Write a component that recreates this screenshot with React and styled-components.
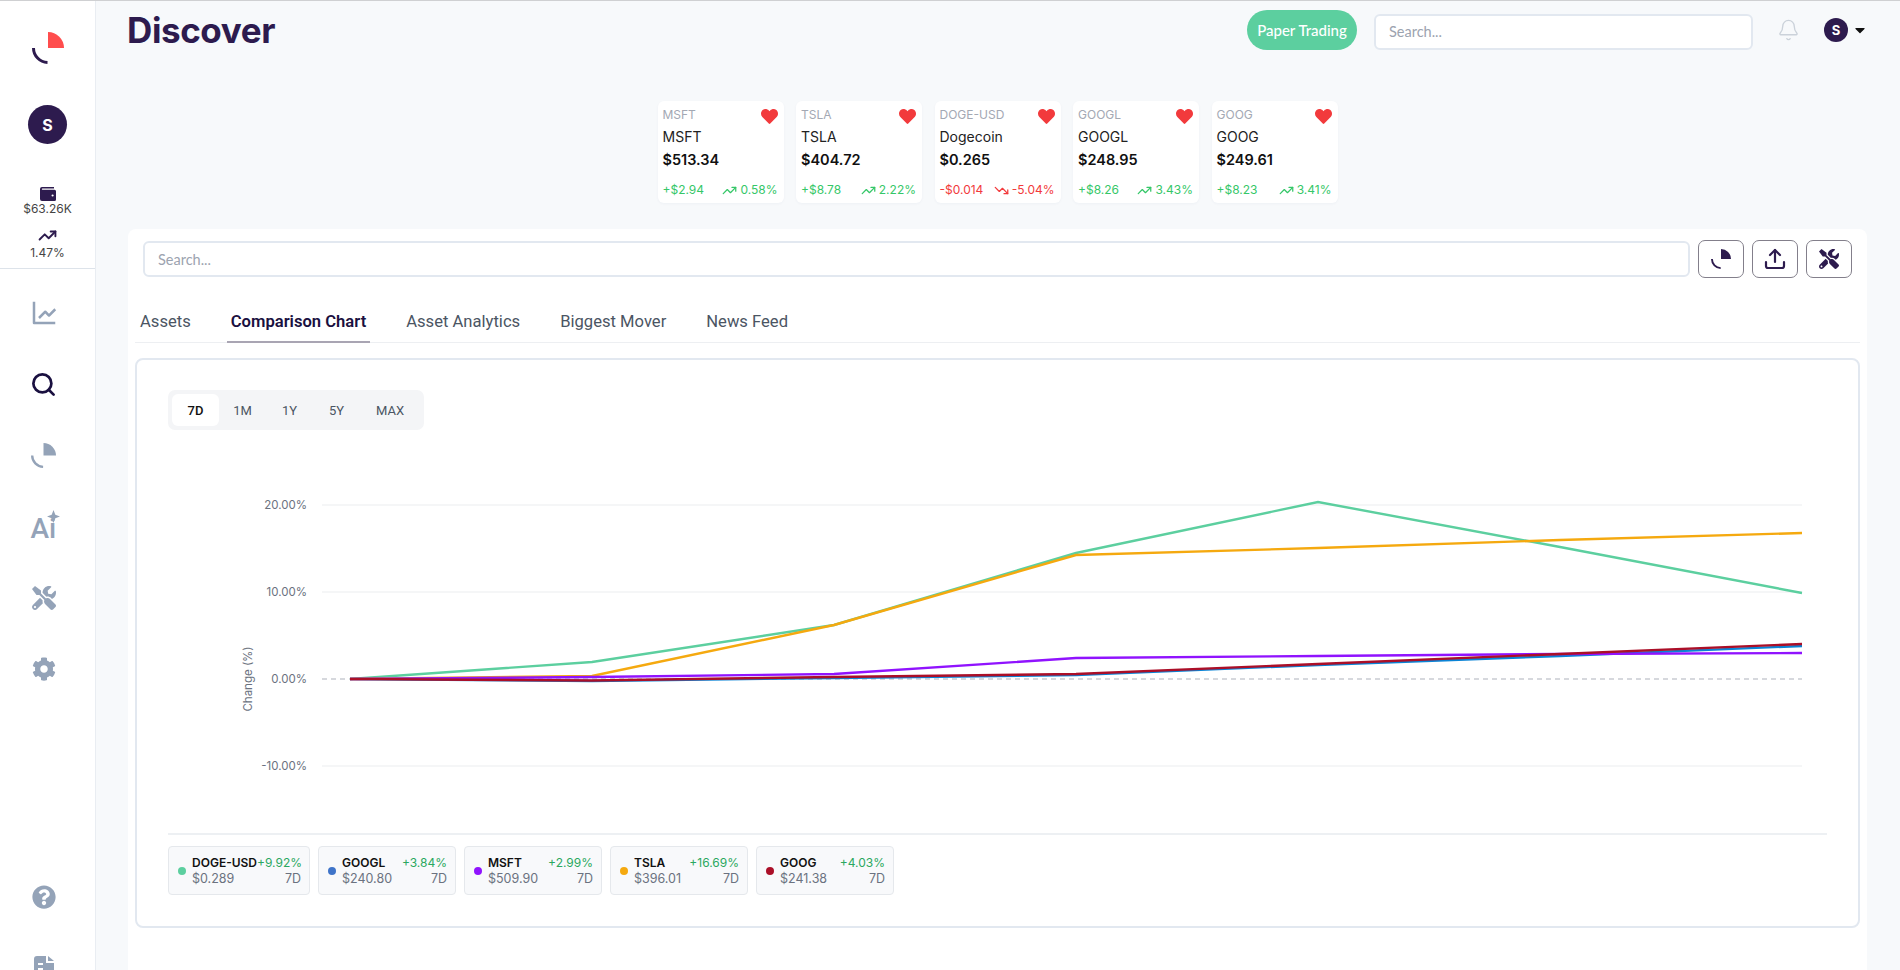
import React from "react";
import styled, { createGlobalStyle } from "styled-components";
import { Search as SearchIcon, TrendingUp, TrendingDown, Bell, Upload } from "lucide-react";
import { FaHeart, FaTools, FaCog, FaQuestionCircle, FaCaretDown } from "react-icons/fa";
import { BiLineChart } from "react-icons/bi";

const Global = createGlobalStyle`
  * { box-sizing: border-box; }
  html, body { margin: 0; padding: 0; height: 100%; overflow: hidden; }
  body { font-family: "Inter", "Liberation Sans", sans-serif; background: #f7f9fb; }
  input::placeholder { color: #9ca3af; }
`;

const tickers = [
  { sym: "MSFT", name: "MSFT", price: "$513.34", diff: "+$2.94", pct: "0.58%", up: true },
  { sym: "TSLA", name: "TSLA", price: "$404.72", diff: "+$8.78", pct: "2.22%", up: true },
  { sym: "DOGE-USD", name: "Dogecoin", price: "$0.265", diff: "-$0.014", pct: "-5.04%", up: false },
  { sym: "GOOGL", name: "GOOGL", price: "$248.95", diff: "+$8.26", pct: "3.43%", up: true },
  { sym: "GOOG", name: "GOOG", price: "$249.61", diff: "+$8.23", pct: "3.41%", up: true },
];

const legend = [
  { sym: "DOGE-USD", price: "$0.289", pct: "+9.92%", color: "#5ccf9f", wide: true },
  { sym: "GOOGL", price: "$240.80", pct: "+3.84%", color: "#3f74c9" },
  { sym: "MSFT", price: "$509.90", pct: "+2.99%", color: "#9013fe" },
  { sym: "TSLA", price: "$396.01", pct: "+16.69%", color: "#f5a90f" },
  { sym: "GOOG", price: "$241.38", pct: "+4.03%", color: "#ab0f28" },
];

const xs = [350, 592, 834, 1076, 1318, 1560, 1802];
const series = [
  { color: "#5ccf9f", ys: [678, 661, 624, 552, 501, 546, 592] },
  { color: "#0a84d6", ys: [678, 680, 677, 674, 664, 655, 645] },
  { color: "#f5a90f", ys: [678, 675, 624, 554, 547, 539, 532] },
  { color: "#9013fe", ys: [678, 676, 673, 657, 655, 653, 652] },
  { color: "#ab0f28", ys: [678, 679.5, 676, 673, 663, 653, 643] },
];
const grid = [
  { y: 504, label: "20.00%" },
  { y: 591, label: "10.00%" },
  { y: 765, label: "-10.00%" },
];

const PieMark = ({ size = 32, fill, stroke }) => (
  <svg width={size} height={size} viewBox="0 0 32 32">
    <path d="M16 0A16 16 0 0 1 32 16H16Z" fill={fill} />
    <path d="M1.5 16A14.5 14.5 0 0 0 15.5 30.5" fill="none" stroke={stroke} strokeWidth="3" />
  </svg>
);

const WalletIcon = () => (
  <svg width="16" height="14" viewBox="0 0 16 14">
    <path
      fill="#2d1b4e"
      d="M2 0h12v1.5H2.4a.6.6 0 0 0 0 1.2H14.5A1.5 1.5 0 0 1 16 4.2v8.3A1.5 1.5 0 0 1 14.5 14H2a2 2 0 0 1-2-2V2a2 2 0 0 1 2-2Zm10.6 7.4a1.1 1.1 0 1 0 0 2.2 1.1 1.1 0 0 0 0-2.2Z"
    />
  </svg>
);

const DocIcon = () => (
  <svg width="20" height="24" viewBox="0 0 20 24">
    <path fill="#94a3b8" d="M3 0h9v7h8v14a3 3 0 0 1-3 3H3a3 3 0 0 1-3-3V3a3 3 0 0 1 3-3Z" />
    <path fill="#94a3b8" d="M14 0l6 5h-6Z" />
    <path fill="#fff" d="M4 7h5v2H4Zm0 5h5v2H4Z" />
  </svg>
);

export default function App() {
  return (
    <Shell>
      <Global />
      <Sidebar>
        <SideTop>
          <LogoBox>
            <PieMark fill="#ff4d4d" stroke="#2d1b4e" />
          </LogoBox>
          <SideAvatar>S</SideAvatar>
          <Stat>
            <WalletIcon />
            <span>$63.26K</span>
          </Stat>
          <Stat $tight>
            <TrendingUp size={19} strokeWidth={2.4} color="#2d1b4e" />
            <span>1.47%</span>
          </Stat>
        </SideTop>
        <NavList>
          <NavItem><BiLineChart size={30} color="#94a3b8" /></NavItem>
          <NavItem><SearchIcon size={27} strokeWidth={2.4} color="#1a1040" /></NavItem>
          <NavItem><PieMark size={25} fill="#94a3b8" stroke="#94a3b8" /></NavItem>
          <NavItem>
            <AiMark>
              Ai
              <AiStar viewBox="0 0 10 10"><path d="M5 0l1.4 3.6L10 5 6.4 6.4 5 10 3.6 6.4 0 5l3.6-1.4Z" /></AiStar>
            </AiMark>
          </NavItem>
          <NavItem><ToolsNudge><FaTools size={24} color="#94a3b8" /></ToolsNudge></NavItem>
          <NavItem><ToolsNudge><FaCog size={24} color="#94a3b8" /></ToolsNudge></NavItem>
        </NavList>
        <NavBottom>
          <NavItem><FaQuestionCircle size={24} color="#94a3b8" /></NavItem>
          <NavItem><DocIcon /></NavItem>
        </NavBottom>
      </Sidebar>

      <Main>
        <Header>
          <Title>Discover</Title>
          <HeaderRight>
            <PaperButton>Paper Trading</PaperButton>
            <HeaderSearch placeholder="Search..." />
            <BellSlot><Bell size={24} strokeWidth={1.4} color="#cbd2da" /></BellSlot>
            <UserMenu>
              <UserAvatar>S</UserAvatar>
              <FaCaretDown size={16} color="#111" />
            </UserMenu>
          </HeaderRight>
        </Header>

        <Tickers>
          {tickers.map((t) => (
            <Ticker key={t.sym}>
              <TickerTop>
                <span>{t.sym}</span>
                <FaHeart size={17} color="#f23a3c" />
              </TickerTop>
              <TickerName>{t.name}</TickerName>
              <TickerPrice>{t.price}</TickerPrice>
              <TickerChange $up={t.up}>
                <span>{t.diff}</span>
                <TickerPct>
                  {t.up ? <TrendingUp size={15} strokeWidth={2} /> : <TrendingDown size={15} strokeWidth={2} />}
                  {t.pct}
                </TickerPct>
              </TickerChange>
            </Ticker>
          ))}
        </Tickers>

        <Panel>
          <Toolbar>
            <PanelSearch placeholder="Search..." />
            <ToolButton><PieMark size={20} fill="#2d1b4e" stroke="#2d1b4e" /></ToolButton>
            <ToolButton><Upload size={24} strokeWidth={2.2} color="#2d1b4e" /></ToolButton>
            <ToolButton><FaTools size={20} color="#2d1b4e" /></ToolButton>
          </Toolbar>

          <Tabs>
            <Tab>Assets</Tab>
            <Tab $active>Comparison Chart</Tab>
            <Tab>Asset Analytics</Tab>
            <Tab>Biggest Mover</Tab>
            <Tab>News Feed</Tab>
          </Tabs>

          <ChartCard>
            <Ranges>
              <Range $active>7D</Range>
              <Range>1M</Range>
              <Range>1Y</Range>
              <Range>5Y</Range>
              <Range>MAX</Range>
            </Ranges>

            <ChartSvg viewBox="168 430 1659 402">
              {grid.map((g) => (
                <g key={g.y}>
                  <line x1="322" x2="1802" y1={g.y} y2={g.y} stroke="#f2f3f5" strokeWidth="1.5" />
                  <AxisText x="307" y={g.y + 4} textAnchor="end">{g.label}</AxisText>
                </g>
              ))}
              <line x1="322" x2="1802" y1="678" y2="678" stroke="#c9ccd2" strokeWidth="1.5" strokeDasharray="5 4" />
              <AxisText x="307" y="682" textAnchor="end">0.00%</AxisText>
              <AxisText x="0" y="0" textAnchor="middle" transform="translate(252 678) rotate(-90)">Change (%)</AxisText>
              {series.map((s) => (
                <polyline
                  key={s.color}
                  points={s.ys.map((y, i) => `${xs[i]},${y}`).join(" ")}
                  fill="none"
                  stroke={s.color}
                  strokeWidth="2.4"
                />
              ))}
            </ChartSvg>

            <Legend>
              {legend.map((l) => (
                <LegendItem key={l.sym} $wide={l.wide}>
                  <Dot $color={l.color} />
                  <LegendText>
                    <LegendRow>
                      <LegendSym>{l.sym}</LegendSym>
                      <LegendPct>{l.pct}</LegendPct>
                    </LegendRow>
                    <LegendRow>
                      <span>{l.price}</span>
                      <span>7D</span>
                    </LegendRow>
                  </LegendText>
                </LegendItem>
              ))}
            </Legend>
          </ChartCard>
        </Panel>
      </Main>
    </Shell>
  );
}

const Shell = styled.div`
  display: flex;
  height: 970px;
  overflow: hidden;
  border-top: 1px solid #cfd0d2;
`;

const Sidebar = styled.aside`
  width: 96px;
  flex: none;
  height: 100%;
  background: #fff;
  border-right: 1px solid #e9edf2;
  display: flex;
  flex-direction: column;
  overflow: hidden;
`;

const SideTop = styled.div`
  height: 268px;
  flex: none;
  padding-left: 0;
  border-bottom: 1px solid #dde3ea;
  display: flex;
  flex-direction: column;
  align-items: center;
`;

const LogoBox = styled.div`
  height: 32px;
  margin-top: 31px;
  display: flex;
`;

const SideAvatar = styled.div`
  width: 39px;
  height: 39px;
  margin-top: 41px;
  border-radius: 50%;
  background: #2d1b4e;
  color: #fff;
  font-size: 16px;
  font-weight: 700;
  display: flex;
  align-items: center;
  justify-content: center;
`;

const Stat = styled.div`
  margin-top: ${(p) => (p.$tight ? "10px" : "43px")};
  display: flex;
  flex-direction: column;
  align-items: center;
  font-size: 12px;
  line-height: 15px;
  color: #444;
`;

const NavList = styled.nav`
  display: flex;
  flex-direction: column;
  padding-top: 8px;
`;

const NavBottom = styled.div`
  margin-top: 155px;
  display: flex;
  flex-direction: column;
`;

const NavItem = styled.div`
  width: 87px;
  height: 71.5px;
  flex: none;
  display: flex;
  align-items: center;
  justify-content: center;
`;

const ToolsNudge = styled.span`
  display: flex;
  margin-bottom: 2px;
`;

const AiMark = styled.div`
  position: relative;
  width: 26px;
  margin-top: 3px;
  font-family: "Roboto", sans-serif;
  font-size: 28px;
  font-weight: 500;
  line-height: 1;
  color: #94a3b8;
`;

const AiStar = styled.svg`
  position: absolute;
  top: -5px;
  right: -3px;
  width: 13px;
  height: 13px;
  fill: #94a3b8;
`;

const Main = styled.main`
  flex: 1;
  min-width: 0;
  padding: 0 33px 0 32px;
`;

const Header = styled.header`
  height: 60px;
  display: flex;
  justify-content: space-between;
  align-items: flex-start;
`;

const Title = styled.h1`
  margin: 9px 0 0 -1px;
  font-family: "Inter", sans-serif;
  font-size: 35px;
  line-height: 40px;
  font-weight: 700;
  color: #2d1b4e;
  letter-spacing: -0.4px;
`;

const HeaderRight = styled.div`
  display: flex;
  align-items: center;
  height: 40px;
  margin-top: 9px;
  margin-right: -28px;
`;

const PaperButton = styled.button`
  width: 110px;
  height: 40px;
  border: 0;
  border-radius: 20px;
  background: #5ccf9f;
  color: #fff;
  font-family: "Lato", sans-serif;
  font-size: 15px;
  font-weight: 500;
  padding: 0;
`;

const SearchInput = styled.input`
  height: 36px;
  border: 2px solid #e2e8f0;
  border-radius: 6px;
  background: #fff;
  padding: 0 13px;
  font-family: "Lato", sans-serif;
  font-size: 14.5px;
  outline: none;
`;

const HeaderSearch = styled(SearchInput)`
  width: 379px;
  margin-left: 17px;
  margin-top: 3px;
`;

const BellSlot = styled.div`
  margin-left: 24px;
  width: 23px;
  display: flex;
`;

const UserMenu = styled.div`
  width: 95px;
  padding-left: 24px;
  display: flex;
  align-items: center;
  gap: 4px;
`;

const UserAvatar = styled.div`
  width: 24px;
  height: 24px;
  border-radius: 50%;
  background: #2d1b4e;
  color: #fff;
  font-size: 13px;
  font-weight: 700;
  display: flex;
  align-items: center;
  justify-content: center;
`;

const Tickers = styled.section`
  margin-top: 40px;
  display: flex;
  justify-content: center;
  gap: 12.5px;
`;

const Ticker = styled.article`
  width: 126px;
  height: 102px;
  background: #fff;
  border-radius: 6px;
  padding: 7px 6px 7px 5px;
  box-shadow: 0 1px 3px rgba(30, 50, 90, 0.04);
`;

const TickerTop = styled.div`
  display: flex;
  justify-content: space-between;
  align-items: flex-start;
  height: 16px;
  font-size: 12px;
  line-height: 13px;
  color: #a3a8b3;
`;

const TickerName = styled.div`
  margin-top: 2px;
  font-size: 14px;
  line-height: 22px;
  color: #222;
`;

const TickerPrice = styled.div`
  font-size: 14.5px;
  line-height: 24px;
  font-weight: 600;
  color: #111;
`;

const TickerChange = styled.div`
  margin-top: 10px;
  display: flex;
  justify-content: space-between;
  font-size: 12px;
  line-height: 16px;
  color: ${(p) => (p.$up ? "#35c768" : "#f23a3c")};
`;

const TickerPct = styled.span`
  display: flex;
  align-items: center;
  gap: 3px;
`;

const Panel = styled.section`
  margin-top: 26px;
  height: 800px;
  background: #fff;
  border-radius: 8px;
  padding: 11px 7px 0;
`;

const Toolbar = styled.div`
  display: flex;
  align-items: center;
  gap: 8px;
  padding: 0 8px 0 8px;
`;

const PanelSearch = styled(SearchInput)`
  flex: 1;
`;

const ToolButton = styled.button`
  width: 46px;
  height: 38px;
  flex: none;
  padding: 0;
  background: #fff;
  border: 1px solid #837f8b;
  border-radius: 7px;
  display: flex;
  align-items: center;
  justify-content: center;
`;

const Tabs = styled.div`
  margin-top: 24px;
  height: 41px;
  padding-left: 1px;
  display: flex;
  gap: 4px;
  border-bottom: 1px solid #edeff2;
`;

const Tab = styled.div`
  height: 41px;
  padding: 9px 4px 0;
  margin-right: 28px;
  font-family: "Roboto", sans-serif;
  font-size: 16.6px;
  line-height: 22px;
  color: ${(p) => (p.$active ? "#1a1040" : "#4b5563")};
  font-weight: ${(p) => (p.$active ? 600 : 400)};
  border-bottom: ${(p) => (p.$active ? "2px solid #a9a5b3" : "0")};
`;

const ChartCard = styled.div`
  margin-top: 15px;
  height: 570px;
  border: 2px solid #e2e8f0;
  border-radius: 8px;
  padding: 30px 31px 0;
`;

const Ranges = styled.div`
  width: 256px;
  height: 40px;
  padding: 4px;
  border-radius: 7px;
  background: #f4f5f7;
  display: flex;
  align-items: center;
`;

const Range = styled.div`
  width: 47px;
  height: 32px;
  display: flex;
  align-items: center;
  justify-content: center;
  border-radius: 6px;
  font-family: "Roboto", sans-serif;
  font-size: 13px;
  color: ${(p) => (p.$active ? "#111" : "#4b5563")};
  font-weight: ${(p) => (p.$active ? 500 : 400)};
  background: ${(p) => (p.$active ? "#fff" : "transparent")};
  &:last-child {
    flex: 1;
  }
`;

const ChartSvg = styled.svg`
  display: block;
  width: 1659px;
  height: 402px;
  margin-top: 1px;
`;

const AxisText = styled.text`
  font-size: 11.5px;
  fill: #6b7280;
`;

const Legend = styled.div`
  border-top: 2px solid #edf0f3;
  padding-top: 11px;
  display: flex;
  gap: 8px;
`;

const LegendItem = styled.div`
  width: ${(p) => (p.$wide ? "142px" : "138px")};
  height: 49px;
  padding: 0 8px 0 9px;
  display: flex;
  align-items: center;
  gap: 6px;
  background: #f8f9fb;
  border: 1px solid #e5e8ec;
  border-radius: 4px;
`;

const Dot = styled.span`
  width: 8px;
  height: 8px;
  flex: none;
  border-radius: 50%;
  background: ${(p) => p.$color};
`;

const LegendText = styled.div`
  flex: 1;
  min-width: 0;
  font-size: 12.5px;
  line-height: 16px;
  color: #6b7280;
  white-space: nowrap;
`;

const LegendRow = styled.div`
  display: flex;
  justify-content: space-between;
`;

const LegendSym = styled.span`
  font-size: 12px;
  font-weight: 600;
  color: #111;
`;

const LegendPct = styled.span`
  font-size: 12px;
  color: #2aa860;
`;
